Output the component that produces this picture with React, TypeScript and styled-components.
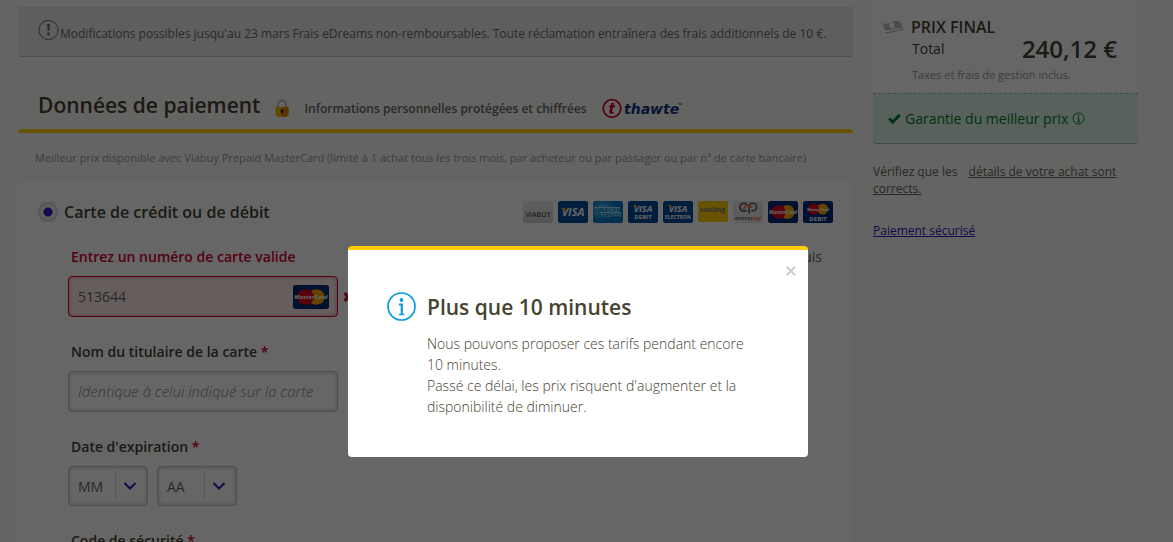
import React from "react";
import styled, { createGlobalStyle, css } from "styled-components";

const Global = createGlobalStyle`
  * { box-sizing: border-box; }
  body {
    margin: 0;
    overflow: hidden;
    background: #faf9f4;
    color: #464332;
    font-family: "Open Sans", "Noto Sans", sans-serif;
    font-size: 14px;
    line-height: 20px;
  }
  h2, h3, p { margin: 0; }
  input, select, button { font: inherit; color: inherit; }
`;

const Page = styled.div`
  display: grid;
  grid-template-columns: minmax(0, 1fr) 265px;
  gap: 20px;
  align-items: start;
  height: 100vh;
  overflow: hidden;
  padding: 0 35px 0 18px;
`;

const Notice = styled.section`
  margin-top: 7px;
  height: 50px;
  padding: 4px 20px 0;
  display: flex;
  align-items: center;
  background: #ebebeb;
  border-bottom: 1px solid #c4c4cc;
  border-radius: 0 0 4px 4px;
  box-shadow: 0 -7px 0 #fff;
  font-size: 12px;
  color: #6c6c6c;
  svg { margin-bottom: 8px; flex: none; }
`;

const SectionHead = styled.header`
  height: 72px;
  padding: 0 20px 10px;
  display: flex;
  align-items: flex-end;
`;

const Heading = styled.h2`
  font-size: 21px;
  line-height: 28px;
  font-weight: 600;
  margin-right: 14px;
`;

const Secure = styled.span`
  font-size: 12px;
  font-weight: 600;
  color: #666;
  margin: 0 15px 0 14px;
`;

const PaymentCard = styled.section`
  background: #fff;
  border-top: 4px solid #fc0;
  border-radius: 4px 4px 0 0;
`;

const PrepaidNote = styled.p`
  padding: 15px 17px 13px;
  background: #f9f9f9;
  font-size: 11px;
  color: #999;
`;

const MethodRow = styled.div`
  padding: 20px 20px 0;
  display: flex;
  align-items: center;
  justify-content: space-between;
`;

const MethodLabel = styled.label`
  display: flex;
  align-items: center;
  gap: 6px;
  font-size: 16px;
  line-height: 22px;
  font-weight: 600;
`;

const Radio = styled.input`
  appearance: none;
  margin: 0;
  width: 20px;
  height: 20px;
  border: 1px solid #ccc;
  border-radius: 50%;
  background: radial-gradient(circle, #3a14c8 0 4px, #f4f4f4 5px);
  box-shadow: inset 0 0 3px #bbb;
`;

const CardList = styled.div`
  display: flex;
  gap: 5px;
`;

const Fields = styled.div`
  display: grid;
  grid-template-columns: minmax(0, 1fr) auto;
  padding: 24px 31px 0 50px;
`;

const Form = styled.form`
  display: grid;
  gap: 25px;
`;

const Field = styled.div`
  display: grid;
  gap: 9px;
`;

const Label = styled.label<{ $error?: boolean }>`
  padding-left: 3px;
  font-weight: 600;
  color: ${(p) => (p.$error ? "#d6002f" : "inherit")};
`;

const Required = styled.span`
  color: #d6002f;
`;

const Line = styled.div`
  display: flex;
  align-items: center;
  gap: 5px;
`;

const frame = css`
  border: 1px solid #c4c4c4;
  border-radius: 4px;
  box-shadow: inset 0 0 4px #bbb;
  background: #fff;
`;

const TextBox = styled.div<{ $error?: boolean }>`
  ${frame}
  width: 270px;
  height: 41px;
  display: flex;
  align-items: center;
  padding: 0 8px 0 9px;
  ${(p) => p.$error && css`
    border-color: #d6002f;
    background: #ffe9e9;
    box-shadow: inset 0 0 4px #c99;
  `}
`;

const Input = styled.input`
  flex: 1;
  min-width: 0;
  border: 0;
  padding: 0;
  outline: 0;
  background: transparent;
  color: #666;
  &::placeholder {
    color: #888;
    font-size: 15px;
    font-style: italic;
    font-weight: 300;
    opacity: 1;
  }
`;

const Selects = styled.div`
  display: flex;
  gap: 9px;
`;

const SelectBox = styled.div`
  ${frame}
  position: relative;
  width: 80px;
  height: 40px;
  svg {
    position: absolute;
    right: 9px;
    top: 4px;
    pointer-events: none;
  }
`;

const Select = styled.select`
  appearance: none;
  width: 100%;
  height: 100%;
  padding: 2px 9px 0;
  border: 0;
  background: transparent;
  color: #666;
`;

const Aside = styled.p`
  color: #666;
`;

const PriceCard = styled.section`
  background: #fff;
  padding: 17px 21px 8px 10px;
  display: grid;
  grid-template-columns: 28px 1fr auto;
`;

const PriceTitle = styled.h3`
  grid-column: 2 / 4;
  font-size: 16px;
  line-height: 20px;
  font-weight: 600;
`;

const Total = styled.span`
  grid-column: 2;
  padding: 2px 0 0 1px;
`;

const Price = styled.strong`
  font-size: 24px;
  line-height: 24px;
  font-weight: 600;
`;

const Taxes = styled.p`
  grid-column: 2 / 4;
  padding: 4px 0 0 1px;
  font-size: 11px;
  color: #999;
`;

const Guarantee = styled.div`
  height: 51px;
  padding: 0 15px;
  display: flex;
  align-items: center;
  gap: 4px;
  color: #007a2c;
  background: #dcf2e3;
  border-top: 1px dashed #a6b8ad;
  border-bottom: 1px solid #a6b8ad;
  border-radius: 0 0 4px 4px;
`;

const Links = styled.div`
  padding-top: 19px;
  display: grid;
  gap: 25px;
  font-size: 12px;
  line-height: 17px;
  color: #666;
`;

const Link = styled.a<{ $primary?: boolean }>`
  color: ${(p) => (p.$primary ? "#3a14c8" : "inherit")};
  margin-left: ${(p) => (p.$primary ? 0 : 8)}px;
`;

const Overlay = styled.div`
  position: fixed;
  inset: 0;
  display: flex;
  align-items: flex-start;
  justify-content: center;
  padding: 246px 17px 0 0;
  background: rgba(0, 0, 0, 0.6);
`;

const Dialog = styled.div`
  position: relative;
  width: 460px;
  padding: 42px 50px 40px 39px;
  display: grid;
  grid-template-columns: 29px 1fr;
  column-gap: 11px;
  background: #fff;
  border-top: 4px solid #fc0;
  border-radius: 4px;
  color: #464332;
`;

const DialogTitle = styled.h2`
  font-size: 21px;
  line-height: 30px;
  font-weight: 600;
`;

const DialogText = styled.p`
  grid-column: 2;
  margin-top: 11px;
  font-weight: 300;
  line-height: 21px;
`;

const Close = styled.button`
  position: absolute;
  top: 15px;
  right: 11px;
  width: 12px;
  height: 12px;
  padding: 0;
  border: 0;
  background: none;
  display: grid;
  place-items: center;
`;

function Mastercard({ large, debit }: { large?: boolean; debit?: boolean }) {
  const y = debit ? 8 : 11;
  const r = debit ? 5.5 : 7;
  return (
    <svg width={large ? 36 : 30} height={large ? 24 : 22} viewBox="0 0 30 22" preserveAspectRatio="none" role="img" aria-label="MasterCard">
      <rect width="30" height="22" rx="2.5" fill="#002878" />
      <circle cx="19.5" cy={y} r={r} fill="#f9a800" />
      <circle cx="10.5" cy={y} r={r} fill="#e1061e" />
      <text x="15" y={y + 2} textAnchor="middle" fontSize={debit ? 4 : 5} fontWeight="700" fontStyle="italic" fill="#fff">MasterCard</text>
      {debit && <text x="15" y="20" textAnchor="middle" fontSize="6" fontWeight="700" fill="#fff">DEBIT</text>}
    </svg>
  );
}

function Visa({ sub }: { sub?: string }) {
  return (
    <svg width="30" height="22" role="img" aria-label="Visa">
      <rect width="30" height="22" rx="2.5" fill="#004a9c" />
      <text x="15" y={sub ? 11 : 15} textAnchor="middle" fontSize={sub ? 9 : 11} fontWeight="700" fontStyle="italic" fill="#fff">VISA</text>
      <path d={sub ? "M5 4h3l1 4z" : "M3 7h4l1 4z"} fill="#f9a800" />
      {sub && <text x="15" y="18" textAnchor="middle" fontSize={sub.length > 5 ? 5 : 6} fontWeight="700" fill="#fff">{sub}</text>}
    </svg>
  );
}

function Viabuy() {
  return (
    <svg width="30" height="22" role="img" aria-label="Viabuy">
      <defs>
        <linearGradient id="silver" x2="0" y2="1"><stop stopColor="#f0f0f0" /><stop offset=".5" stopColor="#e0e0e0" /><stop offset="1" stopColor="#d0d0d0" /></linearGradient>
      </defs>
      <rect width="30" height="22" rx="2.5" fill="url(#silver)" />
      <text x="15" y="16" textAnchor="middle" fontSize="7" fontWeight="600" fill="#555">VIABUY</text>
    </svg>
  );
}

function Amex() {
  return (
    <svg width="30" height="22" role="img" aria-label="American Express">
      <defs>
        <radialGradient id="amex" cx=".3" cy=".4"><stop stopColor="#5cc8f0" /><stop offset="1" stopColor="#0078c4" /></radialGradient>
      </defs>
      <rect width="30" height="22" rx="2.5" fill="url(#amex)" />
      <path d="M1 6h26v5h1v5H7v-5H1z" fill="#a8dcf5" />
      <text x="14" y="10.5" textAnchor="middle" fontSize="5" fontWeight="800" fill="#0085cc">AMERICAN</text>
      <text x="17" y="15.5" textAnchor="middle" fontSize="5" fontWeight="800" fill="#0085cc">EXPRESS</text>
    </svg>
  );
}

function Vueling() {
  return (
    <svg width="30" height="22" role="img" aria-label="Vueling">
      <rect width="30" height="21" rx="2" fill="#fc0" />
      <text x="14.5" y="11" textAnchor="middle" fontSize="7" fontWeight="700" fill="#777">vueling</text>
    </svg>
  );
}

function Entropay() {
  return (
    <svg width="30" height="22" role="img" aria-label="Entropay">
      <rect width="30" height="22" rx="2.5" fill="#e8e8e8" />
      <g fill="none" strokeWidth="1.6">
        <path d="M13.500 9.200A4 4 0 1 1 14 3.800" stroke="#555" />
        <path d="M16 12.500V6a3.800 3.800 0 1 1 3.800 3.800h-1.500" stroke="#555" />
        <path d="M9.500 8c2 .5 3-4 5-4s2 4 5 1" stroke="#f26a30" />
      </g>
      <text x="15" y="18.5" textAnchor="middle" fontSize="6" fontWeight="600" fill="#555">entro<tspan fill="#f05a20">pay</tspan></text>
    </svg>
  );
}

function Thawte() {
  return (
    <svg width="82" height="21" role="img" aria-label="thawte">
      <circle cx="10" cy="10.500" r="8.800" fill="none" stroke="#d6003c" strokeWidth="1.800" />
      <path d="M9.300 5h2.700l-.6 2.500h2l-.4 1.800h-2l-.9 4c-.1.700.6.900 1.700.5l-.3 1.700c-2.800.9-4.600.1-4.100-2l1-4.200H7l.4-1.800h1.400z" fill="#d6003c" />
      <text x="22" y="16" fontFamily="DejaVu Sans, sans-serif" fontSize="14" fontWeight="700" fontStyle="italic" fill="#12357f">thawte</text>
      <text x="76" y="9" fontSize="5" fontWeight="700" fill="#12357f">™</text>
    </svg>
  );
}

function Lock() {
  return (
    <svg width="16" height="20" viewBox="0 0 16 20" aria-hidden="true">
      <path d="M4 9V5.500a4 4 0 0 1 8 0V9" fill="none" stroke="#b8b8b8" strokeWidth="1.800" />
      <path d="M1.500 8h13v6q0 4-4 4h-5q-4 0-4-4z" fill="#f6b800" />
      <path d="M8 8h6.500v6q0 4-4 4H8z" fill="#e38b00" />
      <path d="M8 10.300a1.500 1.500 0 0 1 .8 2.700v2H7.200v-2A1.500 1.500 0 0 1 8 10.300z" fill="#222" />
    </svg>
  );
}

function Info() {
  return (
    <svg width="13" height="13" viewBox="0 0 13 13" fill="none" stroke="currentColor" aria-hidden="true">
      <circle cx="6.500" cy="6.500" r="5.500" />
      <circle cx="6.500" cy="3.600" r=".8" fill="currentColor" stroke="none" />
      <path d="M5.500 5.700h1.200v3.800M5.200 9.700h2.800" />
    </svg>
  );
}

function Chevron() {
  return (
    <svg width="23" height="30" viewBox="0 0 23 30" fill="none" aria-hidden="true">
      <path d="M.5 0v30" stroke="#ddd" />
      <path d="M9.500 12l5.500 5.500L20.500 12" stroke="#3a14c8" strokeWidth="2" />
    </svg>
  );
}

export default function App() {
  return (
    <>
      <Global />
      <Page>
        <main>
          <Notice>
            <svg width="22" height="22" viewBox="0 0 22 22" aria-hidden="true">
              <circle cx="10.500" cy="11" r="9.600" fill="none" stroke="#6c6c6c" />
              <path d="M9 5h3l-.7 7H9.700z" fill="#6c6c6c" />
              <circle cx="10.500" cy="15" r="1.400" fill="#6c6c6c" />
            </svg>
            <p>Modifications possibles jusqu'au 23 mars Frais eDreams non-remboursables. Toute réclamation entraînera des frais additionnels de 10 €.</p>
          </Notice>
          <SectionHead>
            <Heading>Données de paiement</Heading>
            <Lock />
            <Secure>Informations personnelles protégées et chiffrées</Secure>
            <Thawte />
          </SectionHead>
          <PaymentCard>
            <PrepaidNote>Meilleur prix disponible avec Viabuy Prepaid MasterCard (limité à 1 achat tous les trois mois, par acheteur ou par passager ou par nº de carte bancaire)</PrepaidNote>
            <MethodRow>
              <MethodLabel>
                <Radio type="radio" name="method" defaultChecked />
                Carte de crédit ou de débit
              </MethodLabel>
              <CardList>
                <Viabuy />
                <Visa />
                <Amex />
                <Visa sub="DEBIT" />
                <Visa sub="ELECTRON" />
                <Vueling />
                <Entropay />
                <Mastercard />
                <Mastercard debit />
              </CardList>
            </MethodRow>
            <Fields>
              <Form>
                <Field>
                  <Label $error htmlFor="number">Entrez un numéro de carte valide</Label>
                  <Line>
                    <TextBox $error>
                      <Input id="number" defaultValue="513644" />
                      <Mastercard large />
                    </TextBox>
                    <svg width="10" height="10" viewBox="0 0 10 10" aria-hidden="true">
                      <path d="M1.500 1l7 8M8.500 1l-7 8" stroke="#d6002f" strokeWidth="3" />
                    </svg>
                  </Line>
                </Field>
                <Field>
                  <Label htmlFor="holder">Nom du titulaire de la carte <Required>*</Required></Label>
                  <TextBox>
                    <Input id="holder" placeholder="Identique à celui indiqué sur la carte" />
                  </TextBox>
                </Field>
                <Field>
                  <Label htmlFor="month">Date d'expiration <Required>*</Required></Label>
                  <Selects>
                    <SelectBox>
                      <Select id="month"><option>MM</option></Select>
                      <Chevron />
                    </SelectBox>
                    <SelectBox>
                      <Select aria-label="Année"><option>AA</option></Select>
                      <Chevron />
                    </SelectBox>
                  </Selects>
                </Field>
                <Field>
                  <Label htmlFor="code">Code de sécurité <Required>*</Required></Label>
                  <TextBox>
                    <Input id="code" />
                  </TextBox>
                </Field>
              </Form>
              <Aside>depuis</Aside>
            </Fields>
          </PaymentCard>
        </main>
        <aside>
          <PriceCard>
            <svg width="20" height="20" viewBox="0 0 20 20" aria-hidden="true">
              <path d="M0 6.500C6 8 11 2 16.500 4.500L18 11.500C12 9.500 8 15 1.500 12.500z" fill="#bbb" />
              <path d="M2.500 15.500C9 17 13 11.500 19 13.300L17.800 6" fill="none" stroke="#bbb" strokeWidth="1.200" />
              <circle cx="9" cy="8.500" r="2.800" fill="#fff" />
            </svg>
            <PriceTitle>PRIX FINAL</PriceTitle>
            <Total>Total</Total>
            <Price>240,12 €</Price>
            <Taxes>Taxes et frais de gestion inclus.</Taxes>
          </PriceCard>
          <Guarantee>
            <svg width="13" height="11" viewBox="0 0 13 11" aria-hidden="true">
              <path d="M1.200 5.500l3.600 3.600L11.800 1.800" fill="none" stroke="currentColor" strokeWidth="3" />
            </svg>
            Garantie du meilleur prix
            <Info />
          </Guarantee>
          <Links>
            <p>Vérifiez que les <Link href="#details">détails de votre achat sont corrects.</Link></p>
            <p><Link $primary href="#secure">Paiement sécurisé</Link></p>
          </Links>
        </aside>
      </Page>
      <Overlay>
        <Dialog role="dialog" aria-modal="true" aria-labelledby="dialog-title">
          <Close aria-label="Fermer">
            <svg width="10" height="10" viewBox="0 0 10 10" aria-hidden="true">
              <path d="M.7.7l8.600 8.600M9.300.7L.7 9.300" stroke="#ccc" strokeWidth="2" />
            </svg>
          </Close>
          <svg width="29" height="29" viewBox="0 0 29 29" fill="none" stroke="#0a9be3" aria-hidden="true">
            <circle cx="14.500" cy="14.500" r="13.500" strokeWidth="1.700" />
            <circle cx="14.500" cy="8" r="1.900" fill="#0a9be3" stroke="none" />
            <path d="M12 12.500h2.800v9.500" strokeWidth="2.200" />
            <path d="M12 22.500h5.500" strokeWidth="1.400" />
          </svg>
          <DialogTitle id="dialog-title">Plus que 10 minutes</DialogTitle>
          <DialogText>
            Nous pouvons proposer ces tarifs pendant encore 10&nbsp;minutes.<br />
            Passé ce délai, les prix risquent d'augmenter et la disponibilité de diminuer.
          </DialogText>
        </Dialog>
      </Overlay>
    </>
  );
}
